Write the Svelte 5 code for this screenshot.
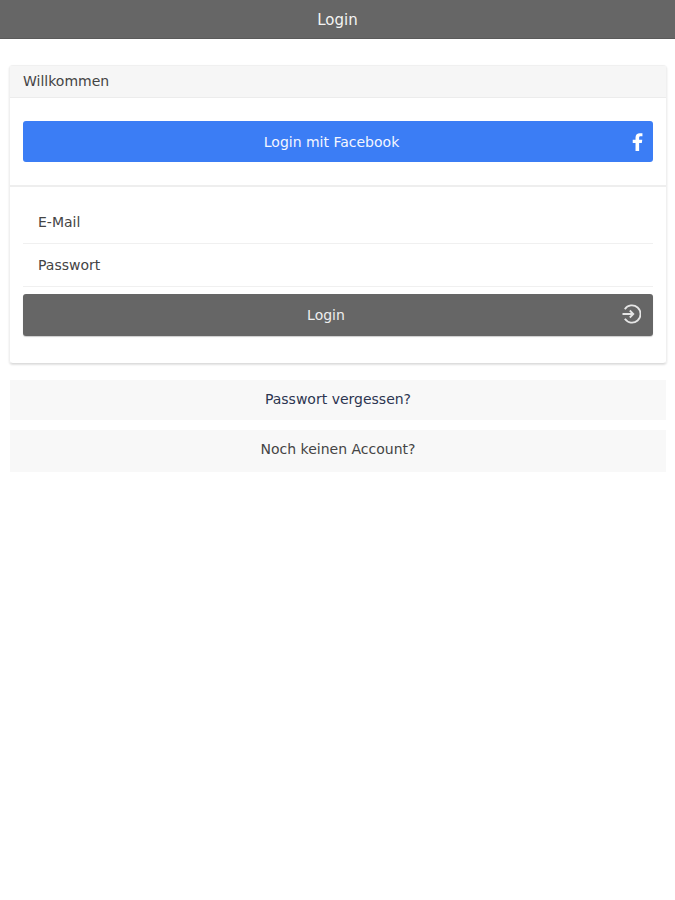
<script>
  let email = $state("");
  let password = $state("");
</script>

<header class="topbar">Login</header>

<main class="page">
  <section class="card">
    <div class="card-head">Willkommen</div>
    <div class="fb-block">
      <button class="btn fb" type="button">
        <span>Login mit Facebook</span>
        <svg class="fb-icon" viewBox="0 0 12 20" width="11" height="18" aria-hidden="true">
          <path fill="#fff" d="M7.8 20V11h3l.5-3.6H7.800V5.400c0-1 .3-1.700 1.700-1.700h2V.400C11 .3 9.800.2 8.600.2 5.800.2 3.800 1.900 3.800 4.900v2.500H.7V11h3.100v9z" />
        </svg>
      </button>
    </div>
    <form class="login-form">
      <input class="field" type="text" placeholder="E-Mail" bind:value={email} />
      <input class="field" type="password" placeholder="Passwort" bind:value={password} />
      <button class="btn login" type="button">
        <span>Login</span>
        <svg class="login-icon" viewBox="0 0 20 20" width="20" height="20" fill="none" stroke="#e6e6e6" stroke-width="1.800" aria-hidden="true">
          <path d="M3.800 5.200A8.600 8.600 0 1 1 3.800 14.800" />
          <path d="M1.500 10h10.500M8.800 6.500l3.500 3.500-3.500 3.500" />
        </svg>
      </button>
    </form>
  </section>

  <a class="link-row first" href="#forgot">Passwort vergessen?</a>
  <a class="link-row second" href="#register">Noch keinen Account?</a>
</main>

<style>
  :global(body) {
    margin: 0;
    background: #fff;
    font-family: "DejaVu Sans", sans-serif;
    font-size: 14px;
    color: #333;
  }

  .topbar {
    height: 38px;
    line-height: 40px;
    background: #666;
    border-bottom: 1px solid #5a5a5a;
    color: #f4f4f4;
    font-size: 15px;
    text-align: center;
  }

  .page {
    display: flex;
    flex-direction: column;
    padding: 26px 8px 0 9px;
  }

  .card {
    display: flex;
    flex-direction: column;
    height: 299px;
    box-sizing: border-box;
    border: 1px solid #f0f0f0;
    border-bottom-color: #ddd;
    border-radius: 4px;
    box-shadow: 0 1px 2px rgba(0, 0, 0, 0.12);
  }

  .card-head {
    height: 32px;
    line-height: 30px;
    padding: 0 13px;
    background: #f6f6f6;
    border-bottom: 1px solid #ececec;
    box-sizing: border-box;
    color: #444;
  }

  .fb-block {
    padding: 23px 13px 23px;
    border-bottom: 2px solid #eee;
  }

  .btn {
    position: relative;
    display: flex;
    align-items: center;
    justify-content: center;
    width: 100%;
    border: none;
    border-radius: 3px;
    color: #f4f6ff;
    font: inherit;
    padding: 0 13px 0 0;
  }

  .fb {
    height: 41px;
    background: #3b7df5;
  }

  .fb-icon {
    position: absolute;
    right: 10px;
    top: 12px;
  }

  .login-form {
    display: flex;
    flex-direction: column;
    padding: 14px 13px 0;
  }

  .field {
    height: 43px;
    box-sizing: border-box;
    border: none;
    border-bottom: 1px solid #f0f0f0;
    outline: none;
    padding: 0 15px;
    font: inherit;
    color: #444;
    background: transparent;
  }

  .field::placeholder {
    color: #444;
    opacity: 1;
  }

  .login {
    height: 42px;
    margin-top: 7px;
    background: #666;
    color: #eee;
    padding-right: 24px;
    box-shadow: 0 1px 1px rgba(0, 0, 0, 0.2);
  }

  .login-icon {
    position: absolute;
    right: 12px;
    top: 10px;
  }

  .link-row {
    display: block;
    margin: 0 1px;
    background: #f8f8f8;
    text-align: center;
    text-decoration: none;
    color: #444;
  }

  .first {
    height: 40px;
    line-height: 38px;
    margin-top: 16px;
    color: #2c3550;
  }

  .second {
    height: 42px;
    line-height: 38px;
    margin-top: 10px;
  }
</style>
